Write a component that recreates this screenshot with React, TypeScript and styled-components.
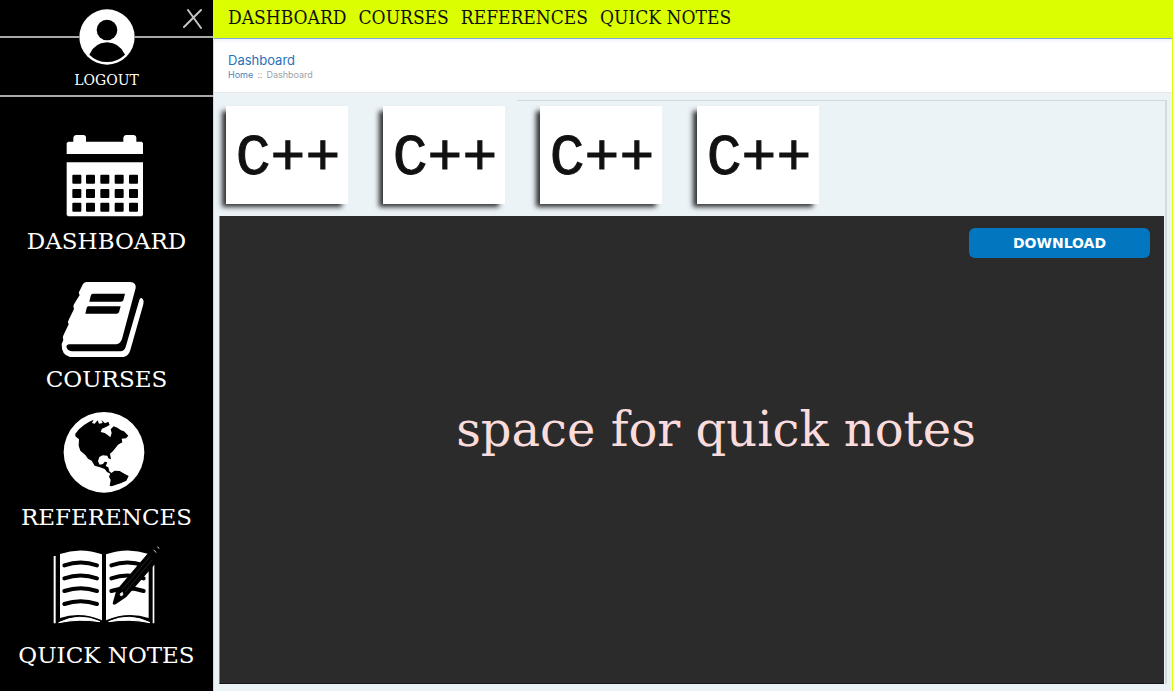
import React from "react";
import styled, { createGlobalStyle } from "styled-components";

const slab = `"DejaVu Serif", "Liberation Serif", serif`;
const slabNarrow = `"DejaVu Serif Condensed", "DejaVu Serif", serif`;
const lime = "#dbff00";

const GlobalStyle = createGlobalStyle`
  *, *::before, *::after { box-sizing: border-box; }
  body { margin: 0; background: #ebf3f7; }
  a { color: inherit; text-decoration: none; }
  button { border: 0; padding: 0; cursor: pointer; }
`;

const Page = styled.div`
  display: flex;
  min-height: 100vh;
`;

const Sidebar = styled.aside`
  position: relative;
  flex: 0 0 213px;
  background: #000;
  color: #fff;
  font-family: ${slab};
`;

const Account = styled.div`
  display: flex;
  flex-direction: column;
  height: 97px;
  padding-top: 9px;
  border-bottom: 2px solid #a9a9a9;
`;

const AvatarRow = styled.div`
  display: flex;
  align-items: center;
  &::before,
  &::after {
    content: "";
    flex: 1;
    height: 2px;
    background: #a9a9a9;
  }
`;

const Logout = styled.button`
  align-self: center;
  margin-top: 5px;
  background: none;
  color: #fff;
  font: 14px/20px ${slab};
`;

const Close = styled.button`
  position: absolute;
  top: 8px;
  right: 10px;
  width: 20px;
  height: 22px;
  background: none;
  svg { display: block; }
`;

const Menu = styled.nav`
  display: flex;
  flex-direction: column;
  gap: 14px;
  padding: 35px 0 20px;
`;

const MenuItem = styled.a`
  display: flex;
  flex-direction: column;
  align-items: center;
  gap: 4px;
  font-size: 23px;
  line-height: 30px;
  white-space: nowrap;
`;

const Main = styled.main`
  display: flex;
  flex: 1;
  flex-direction: column;
  min-width: 0;
  border: solid ${lime};
  border-width: 0 1px;
`;

const TopNav = styled.nav`
  display: flex;
  gap: 12px;
  height: 39px;
  padding: 4px 14px;
  background: ${lime};
  border-bottom: 1px solid #7fa6d6;
  color: #111;
  font: 19px/26px ${slabNarrow};
  white-space: nowrap;
`;

const PageHeader = styled.header`
  height: 54px;
  padding: 12px 14px 0;
  background: linear-gradient(#eef3fb, #fff 4px);
  border-bottom: 1px solid #e9e9ed;
  font-family: Inter, "Open Sans", sans-serif;
`;

const Title = styled.h1`
  margin: 0;
  color: #2a71b8;
  font-size: 13px;
  font-weight: 400;
  line-height: 18px;
`;

const Crumbs = styled.div`
  display: flex;
  gap: 4px;
  color: #9da2a8;
  font-size: 9px;
  line-height: 12px;
  a { color: #4c84c0; }
`;

const Frame = styled.section`
  display: flex;
  flex: 1;
  flex-direction: column;
  margin: 7px 5px 7px;
  padding: 6px 1px 0 0;
  border-right: 2px solid #d2dade;
  background: linear-gradient(#d2dade, #d2dade) no-repeat right top / calc(100% - 298px) 1px;
`;

const Cards = styled.div`
  display: flex;
  flex-wrap: wrap;
  gap: 12px 35px;
  padding: 0 7px 12px;
`;

const Card = styled.a`
  display: flex;
  align-items: center;
  justify-content: center;
  width: 122px;
  height: 98px;
  padding: 8px 0 0 2px;
  background: #fff;
  box-shadow: -5px 4px 5px -1px rgba(0, 0, 0, 0.8);
  color: #111;
  font: 58px/90px "Liberation Mono", monospace;
  -webkit-text-stroke: 1px #111;
`;

const Notes = styled.div`
  display: flex;
  flex: 1;
  flex-direction: column;
  padding: 12px 14px;
  background: #2b2b2b;
  border-left: 1px solid #7d8386;
  border-bottom: 1px solid #1b151b;
`;

const Download = styled.button`
  align-self: flex-end;
  width: 181px;
  height: 30px;
  border-radius: 6px;
  background: #0277bf;
  color: #fff;
  font: bold 14px/30px "DejaVu Sans", sans-serif;
`;

const Placeholder = styled.p`
  display: flex;
  flex: 1;
  align-items: center;
  justify-content: center;
  margin: 0;
  padding: 0 0 72px 48px;
  color: #fbdcdc;
  font: 48px/58px ${slab};
`;

const Glyph = ({ top, children }: { top: number; children: React.ReactNode }) => (
  <svg width="121" height="90" viewBox={`138 ${top} 363 270`} fill="#fff" aria-hidden="true">
    {children}
  </svg>
);

const CalendarIcon = () => (
  <Glyph top={21}>
    <path d="M200 87V54l5-4h15V38q1-8 8-8h22q8 0 8 8v12h112V38q1-8 8-8h22q8 0 9 8v12h16l4 4v33z" />
    <path d="M200 112h229v158l-4 4H204l-4-4z" />
    {[149, 192, 233].map((y) =>
      [217, 258, 301, 344, 387].map((x) => (
        <rect key={`${x}-${y}`} x={x} y={y} width="27" height="27" rx="3" fill="#000" />
      ))
    )}
  </Glyph>
);

const BookIcon = () => (
  <Glyph top={0}>
    <path d="M262 36H391Q409 38 407 54L366 207Q361 221 349 223H207Q197 225 200 233Q204 243 217 244H362Q373 243 377 231L418 90Q422 80 428 87Q433 92 430 103L391 240Q386 258 370 261H210Q184 255 185 222L190 210Q186 200 191 194L206 163Q202 154 207 148L222 117Q217 109 222 103L239 75Q234 67 239 62L249 42Q254 35 262 36Z" />
    <path d="M278 71H375L370 91Q368 95 363 95H268L272 78Q273 72 278 71ZM265 109H362L357 127Q355 131 350 131H256L260 114Q261 110 265 109Z" fill="#000" />
  </Glyph>
);

const GlobeIcon = () => (
  <Glyph top={24}>
    <circle cx="312" cy="157" r="121" />
    <path
      fill="#000"
      d="M226 101L237 88L252 75L268 65L281 59L276 69L284 71L293 61L297 71L308 69L304 60L315 70L325 65L329 75L318 81L306 86L302 96L314 99L322 104L331 112L335 99L332 88L341 79L352 83L363 91L372 94L385 107L378 115L365 116L367 127L354 134L344 147L337 155L330 161L333 178L325 175L322 167L308 166L298 171L294 184L299 194L309 192L314 185L322 187L317 198L325 202L328 214L334 219L344 212L359 213L373 221L386 228L379 242L362 250L346 255L335 259L329 257L332 240L327 230L331 221L321 216L314 207L300 202L284 197L275 182L264 176L256 165L241 152L236 137L237 118L226 109Z"
    />
  </Glyph>
);

const NotesIcon = () => (
  <Glyph top={33}>
    <path d="M161 63h6v202h-6zM458 85h5v180h-5z" />
    <path d="M180 57Q242 35 306 58V256Q242 228 180 249ZM318 58Q382 35 446 57V249Q382 228 318 256Z" />
    <path d="M176 263Q238 232 300 260Q238 250 176 263ZM326 260Q388 232 450 263Q388 250 326 260Z" stroke="#fff" strokeWidth="3" />
    <g fill="none" stroke="#000" strokeWidth="12" strokeLinecap="round">
      {[91, 130, 168, 207].map((y) => (
        <path key={y} d={`M193 ${y}Q242 ${y - 17} 291 ${y}`} />
      ))}
      {[91, 130, 168].map((y) => (
        <path key={y} d={`M334 ${y}Q382 ${y - 17} 431 ${y}`} />
      ))}
    </g>
    <path d="M338 205L349 166L447 51L472 38L478 56L475 76L379 186L347 208Q339 211 338 205Z" fill="#000" />
    <path d="M367 163L449 66M376 171L457 74" stroke="#333" strokeWidth="2" />
    <path d="M360 177l7-5 2 7-6 4zM461 45l8 8M473 35l4 6" stroke="#ddd" strokeWidth="3" />
  </Glyph>
);

const AvatarIcon = () => (
  <svg width="56" height="56" viewBox="237 25 168 168" aria-hidden="true">
    <circle cx="321" cy="109" r="83" fill="#fff" />
    <circle cx="321" cy="88" r="31" />
    <path d="M268 162Q283 126 321 125Q359 126 375 162Q352 184 321 184Q290 184 268 162Z" />
  </svg>
);

const sections = [
  { label: "DASHBOARD", Icon: CalendarIcon },
  { label: "COURSES", Icon: BookIcon },
  { label: "REFERENCES", Icon: GlobeIcon },
  { label: "QUICK NOTES", Icon: NotesIcon },
];

const courses = ["C++", "C++", "C++", "C++"];

export default function App() {
  return (
    <Page>
      <GlobalStyle />
      <Sidebar>
        <Account>
          <AvatarRow>
            <AvatarIcon />
          </AvatarRow>
          <Logout type="button">LOGOUT</Logout>
        </Account>
        <Close type="button" aria-label="Close menu">
          <svg width="20" height="22" viewBox="0 0 20 22" fill="none" stroke="#c4c4c4" strokeWidth="2" strokeLinecap="round">
            <path d="M5 2L18 20M18 2L1 19" />
          </svg>
        </Close>
        <Menu aria-label="Sections">
          {sections.map(({ label, Icon }) => (
            <MenuItem key={label} href="#">
              <Icon />
              {label}
            </MenuItem>
          ))}
        </Menu>
      </Sidebar>
      <Main>
        <TopNav aria-label="Main">
          {sections.map(({ label }) => (
            <a key={label} href="#">{label}</a>
          ))}
        </TopNav>
        <PageHeader>
          <Title>Dashboard</Title>
          <Crumbs>
            <a href="#">Home</a>
            <span>::</span>
            <span>Dashboard</span>
          </Crumbs>
        </PageHeader>
        <Frame>
          <Cards>
            {courses.map((name, i) => (
              <Card key={i} href="#">{name}</Card>
            ))}
          </Cards>
          <Notes>
            <Download type="button">DOWNLOAD</Download>
            <Placeholder>space for quick notes</Placeholder>
          </Notes>
        </Frame>
      </Main>
    </Page>
  );
}
